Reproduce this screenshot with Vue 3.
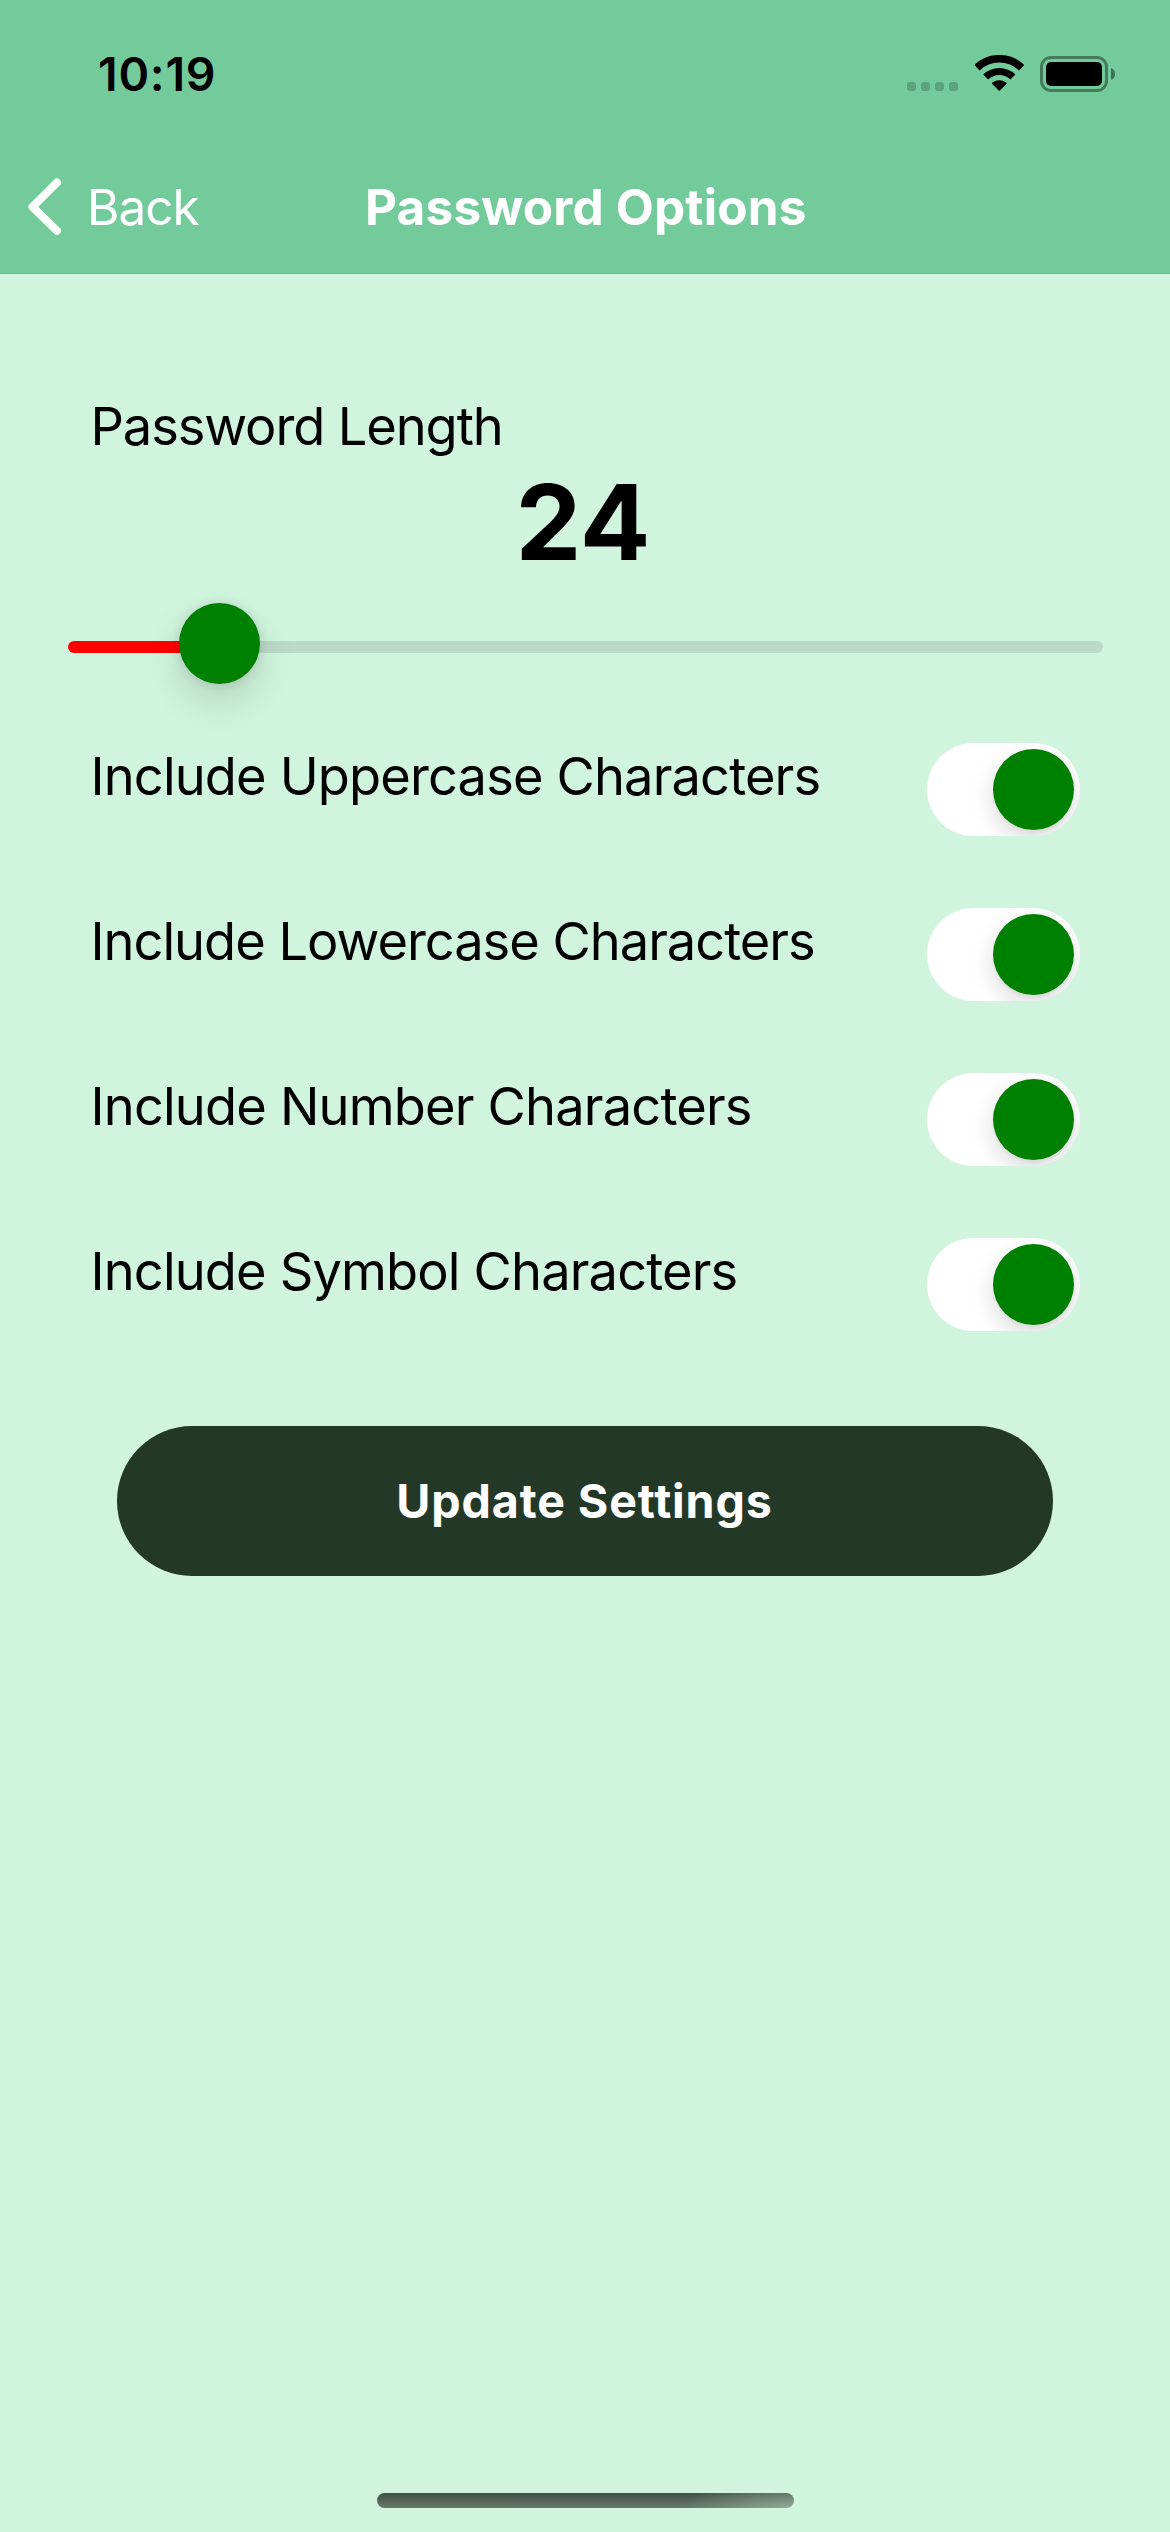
<script setup>
import { ref } from 'vue'

const length = ref(24)
const min = 10
const max = 130
const options = ref([
  { label: 'Include Uppercase Characters', tracking: -0.85, on: true },
  { label: 'Include Lowercase Characters', tracking: -1.01, on: true },
  { label: 'Include Number Characters', tracking: -0.82, on: true },
  { label: 'Include Symbol Characters', tracking: -0.85, on: true }
])
// The thumb travels between the two ends of the track.
const thumbLeft = () => `${((length.value - min) / (max - min)) * (1035 - 81)}px`
</script>

<template>
  <div class="screen">
    <header class="header">
      <div class="status">
        <span class="time">10:19</span>
        <div class="indicators">
          <div class="dots"><i v-for="n in 4" :key="n"></i></div>
          <svg class="wifi" width="49" height="37" viewBox="0 0 49 37" fill="none" stroke="#000">
            <path d="M2 12.7A32.2 32.2 0 0 1 46.6 12.7" stroke-width="7.6" />
            <path d="M10.7 22A19.5 19.5 0 0 1 37.9 22" stroke-width="7" />
            <path d="M24.3 36L17 28.8Q16.8 28 17.5 27.5A11 11 0 0 1 31.1 27.5Q31.8 28 31.6 28.8Z" fill="#000" stroke="none" />
          </svg>
          <svg class="battery" width="76" height="36" viewBox="0 0 76 36">
            <rect x="1.5" y="1.5" width="65" height="33" rx="9.5" fill="none" stroke="#000" stroke-opacity=".4" stroke-width="3" />
            <rect x="6" y="6" width="56" height="24" rx="5" />
            <path d="M71 12A6.5 6.5 0 0 1 71 24Z" fill-opacity=".45" />
          </svg>
        </div>
      </div>
      <nav class="nav">
        <button class="back">
          <svg width="34" height="58" viewBox="0 0 34 58" fill="none" stroke="#fff" stroke-width="8" stroke-linecap="round" stroke-linejoin="round">
            <path d="M29 4.5L4.5 28.9L29 52.8" />
          </svg>
          <span>Back</span>
        </button>
        <h1 class="title">Password Options</h1>
      </nav>
    </header>

    <main class="content">
      <div class="caption">Password Length</div>
      <div class="value">{{ length }}</div>
      <div class="slider">
        <div class="fill" :style="{ width: thumbLeft() }"></div>
        <div class="thumb"></div>
        <div class="rest"></div>
      </div>
      <div class="options">
        <div v-for="o in options" :key="o.label" class="option">
          <span class="label" :style="{ letterSpacing: o.tracking + 'px' }">{{ o.label }}</span>
          <button class="switch" :class="{ on: o.on }" @click="o.on = !o.on"><i class="knob"></i></button>
        </div>
      </div>
      <button class="update">Update Settings</button>
    </main>

    <div class="home"></div>
  </div>
</template>

<style>
body { margin: 0; }
</style>

<style scoped>
.screen {
  box-sizing: border-box;
  width: 1170px;
  height: 2532px;
  display: flex;
  flex-direction: column;
  overflow: hidden;
  background: #d0f4dd;
  color: #000;
  font-family: Inter, "Liberation Sans", sans-serif;
}
button {
  border: 0;
  padding: 0;
  background: none;
  font-family: inherit;
}
.header {
  box-sizing: border-box;
  height: 274px;
  background: #73cb9b;
  border-bottom: 1px solid #83b196;
}
.status {
  box-sizing: border-box;
  height: 141px;
  display: flex;
  justify-content: space-between;
  align-items: flex-start;
  padding: 55px 54px 0 98px;
}
.time {
  font-size: 46.5px;
  font-weight: 600;
  line-height: 38px;
  letter-spacing: .75px;
}
.indicators {
  display: flex;
  align-items: flex-start;
}
.dots {
  display: flex;
  gap: 5px;
  padding-top: 27px;
  margin-right: 17px;
}
.dots i {
  width: 9px;
  height: 9px;
  border-radius: 3px;
  background: rgba(0, 0, 0, .2);
}
.wifi { margin-right: 16px; }
.battery { margin-top: 1px; }
.nav {
  height: 132px;
  display: flex;
  align-items: center;
}
.back {
  width: 365px;
  display: flex;
  align-items: center;
  gap: 25px;
  padding-left: 28px;
  box-sizing: border-box;
  color: #fff;
  font-size: 49.5px;
  line-height: 60px;
  letter-spacing: -1px;
}
.title {
  margin: 0;
  color: #fff;
  font-size: 49.5px;
  font-weight: 700;
  line-height: 60px;
  letter-spacing: .16px;
  white-space: nowrap;
}
.content {
  display: flex;
  flex-direction: column;
  padding-top: 122px;
}
.caption {
  padding-left: 90.5px;
  font-size: 52.4px;
  line-height: 60px;
  letter-spacing: -1.1px;
}
.value {
  height: 132px;
  padding-right: 4px;
  font-size: 104.6px;
  font-weight: 700;
  line-height: 132px;
  text-align: center;
}
.slider {
  height: 81px;
  width: 1035px;
  margin: 15px 0 0 68px;
  display: flex;
  align-items: flex-start;
}
.fill,
.rest {
  height: 12px;
  margin-top: 38px;
}
.fill {
  box-sizing: content-box;
  padding-right: 40px;
  margin-right: -40px;
  border-radius: 6px 0 0 6px;
  background: #f00;
}
.thumb {
  z-index: 1;
  flex: none;
  width: 81px;
  height: 81px;
  border-radius: 50%;
  background: #008000;
  box-shadow: 0 1px 12px rgba(0, 0, 0, .12), 0 18px 39px rgba(0, 0, 0, .13);
}
.rest {
  flex: 1;
  margin-left: -40px;
  border-radius: 0 6px 6px 0;
  background: #bcdac8;
}
.options {
  display: flex;
  flex-direction: column;
  gap: 72px;
  margin: 59px 90px 0 90.5px;
}
.option {
  display: flex;
  justify-content: space-between;
  align-items: flex-start;
  height: 93px;
}
.label {
  font-size: 52.4px;
  line-height: 66px;
  white-space: nowrap;
}
.switch {
  box-sizing: border-box;
  width: 153px;
  height: 93px;
  padding: 6px;
  display: flex;
  overflow: hidden;
  border-radius: 46.5px;
  background: #fff;
}
.switch.on { justify-content: flex-end; }
.knob {
  width: 81px;
  height: 81px;
  border-radius: 50%;
  background: #008000;
  box-shadow: 0 9px 24px rgba(0, 0, 0, .15), 0 3px 3px rgba(0, 0, 0, .04);
}
.update {
  width: 936px;
  height: 150px;
  margin: 95px 0 0 117px;
  padding-right: 1px;
  border-radius: 75px;
  background: #233827;
  color: #fff;
  font-size: 46.6px;
  font-weight: 700;
  line-height: 148px;
  letter-spacing: .9px;
}
.home {
  width: 417px;
  height: 15px;
  margin: auto 0 24px 377px;
  border-radius: 7.5px;
  background:
    radial-gradient(110px 34px at 100% 100%, rgba(209, 245, 221, .4), rgba(209, 245, 221, 0)),
    linear-gradient(#424f46, #68796d);
}
</style>
